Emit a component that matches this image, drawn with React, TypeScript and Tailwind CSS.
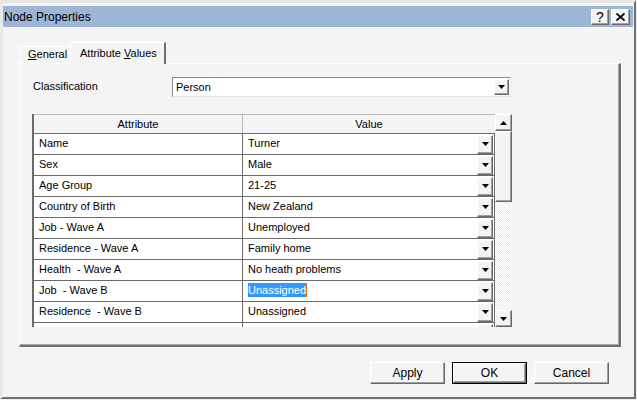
const rows: [string, string][] = [
  ["Name", "Turner"],
  ["Sex", "Male"],
  ["Age Group", "21-25"],
  ["Country of Birth", "New Zealand"],
  ["Job - Wave A", "Unemployed"],
  ["Residence - Wave A", "Family home"],
  ["Health  - Wave A", "No heath problems"],
  ["Job  - Wave B", "Unassigned"],
  ["Residence  - Wave B", "Unassigned"],
];

const bevel =
  "border border-t-white border-l-white border-r-[#696969] border-b-[#696969] shadow-[inset_-1px_-1px_0_#a0a0a0] bg-[#f4f4f4]";

function Tri({ up = false }: { up?: boolean }) {
  return (
    <svg width="7" height="4" viewBox="0 0 7 4">
      <polygon points={up ? "0,4 7,4 3.5,0" : "0,0 7,0 3.5,4"} fill="#000" />
    </svg>
  );
}

function DropBtn({ className = "" }: { className?: string }) {
  return (
    <div className={`flex items-center justify-center ${bevel} ${className}`}>
      <Tri />
    </div>
  );
}

function DlgButton({ label, def = false }: { label: string; def?: boolean }) {
  return (
    <div className={`w-[75px] h-[22px] ${def ? "border border-black" : ""}`}>
      <div className={`w-full h-full flex items-center justify-center text-[12px] ${bevel}`}>{label}</div>
    </div>
  );
}

export default function App() {
  return (
    <div
      className="w-[637px] h-[400px] bg-[#efefef] overflow-hidden text-black"
      style={{ fontFamily: '"Liberation Sans", Arial, sans-serif' }}
    >
      <div className="w-[636px] h-[399px] bg-[#f4f4f4] border-t-[3px] border-t-[#e6e6e6] border-l-[3px] border-l-[#e9e9e9] border-r-2 border-r-[#6f6f6f] border-b-2 border-b-[#6f6f6f] pt-[3px] pr-[1px] flex flex-col">
        {/* Title bar */}
        <div className="h-[21px] bg-[#9db5d6] flex items-center pl-[1px] pr-[3px]">
          <span className="text-[12px] leading-none">Node Properties</span>
          <div className="ml-auto flex gap-[2px]">
            <div className={`w-[18px] h-[16px] flex items-center justify-center text-[14px] leading-none ${bevel}`}>?</div>
            <div className={`w-[19px] h-[16px] flex items-center justify-center ${bevel}`}>
              <svg width="9" height="8" viewBox="0 0 9 8">
                <path d="M0.5 0.5 L8.5 7.5 M8.5 0.5 L0.5 7.5" stroke="#000" strokeWidth="1.8" />
              </svg>
            </div>
          </div>
        </div>

        {/* Tabs */}
        <div className="pl-[16px] mt-[15px] flex items-end h-[21px] text-[11px]">
          <div className="w-[52px] h-[17px] border-t border-l border-t-white border-l-white flex items-center pl-[8px] pb-[1px]">
            <span>
              <span className="underline">G</span>eneral
            </span>
          </div>
          <div className="-ml-[1px] w-[96px] h-[22px] -mb-[1px] bg-[#f4f4f4] border-t border-l border-t-white border-l-white border-r-2 border-r-[#6f6f6f] flex items-start pt-[2px] pl-[9px] relative z-10">
            <span>
              Attribute <span className="underline">V</span>alues
            </span>
          </div>
        </div>

        {/* Tab panel */}
        <div className="ml-[16px] w-[602px] h-[284px] border-t border-l border-t-white border-l-white border-r-2 border-r-[#6f6f6f] border-b-2 border-b-[#6f6f6f] shadow-[inset_-1px_-1px_0_#a8a8a8] text-[11px] pt-[13px] pl-[12px]">
          <div className="flex items-center">
            <div className="w-[140px] pl-[1px] -mt-[1px]">Classification</div>
            <div className="w-[339px] h-[20px] bg-white border border-t-[#8a8a8a] border-l-[#8a8a8a] border-r-[#e8e8e8] border-b-[#e8e8e8] flex items-center pl-[3px] pr-[1px]">
              <span>Person</span>
              <DropBtn className="ml-auto w-[15px] h-[16px]" />
            </div>
          </div>

          {/* Grid */}
          <div className="mt-[17px] flex w-[480px] h-[213px]">
            <div className="w-[463px] h-full overflow-hidden bg-white border-l-2 border-l-[#6b6b6b]">
              <div className="flex h-[20px] bg-[#f4f4f4] border-t border-t-[#b8b8b8] border-b border-b-[#6b6b6b]">
                <div className="w-[208px] flex items-center justify-center">Attribute</div>
                <div className="w-[253px] border-l border-l-[#b8b8b8] flex items-center justify-center">Value</div>
              </div>
              {[...rows, ["", ""] as [string, string]].map(([a, v], i) => (
                <div key={i} className="flex h-[21px] border-b border-b-[#6b6b6b]">
                  <div className="w-[208px] pl-[5px] pb-[2px] flex items-center whitespace-pre">{a}</div>
                  <div className="w-[253px] border-l border-l-[#6b6b6b] flex items-center pl-[5px] pr-[1px] border-r border-r-[#6b6b6b]">
                    {i === 7 ? (
                      <span className="bg-[#3399ff] text-white border-r border-r-[#e07020] leading-[14px] -mt-[2px]">{v}</span>
                    ) : (
                      <span className="-mt-[2px]">{v}</span>
                    )}
                    <DropBtn className="ml-auto w-[16px] h-[19px]" />
                  </div>
                </div>
              ))}
            </div>
            <div className="w-[17px] h-full flex flex-col">
              <div className={`w-[17px] h-[17px] flex items-center justify-center ${bevel}`}>
                <Tri up />
              </div>
              <div className={`w-[17px] h-[71px] ${bevel}`} />
              <div className="flex-1 bg-[repeating-conic-gradient(#ffffff_0_25%,#ececec_0_50%)] bg-[length:2px_2px]" />
              <div className={`w-[17px] h-[17px] flex items-center justify-center ${bevel}`}>
                <Tri />
              </div>
            </div>
          </div>
        </div>

        {/* Buttons */}
        <div className="mt-[15px] flex justify-end gap-[7px] pr-[24px]">
          <DlgButton label="Apply" />
          <DlgButton label="OK" def />
          <DlgButton label="Cancel" />
        </div>
      </div>
    </div>
  );
}
